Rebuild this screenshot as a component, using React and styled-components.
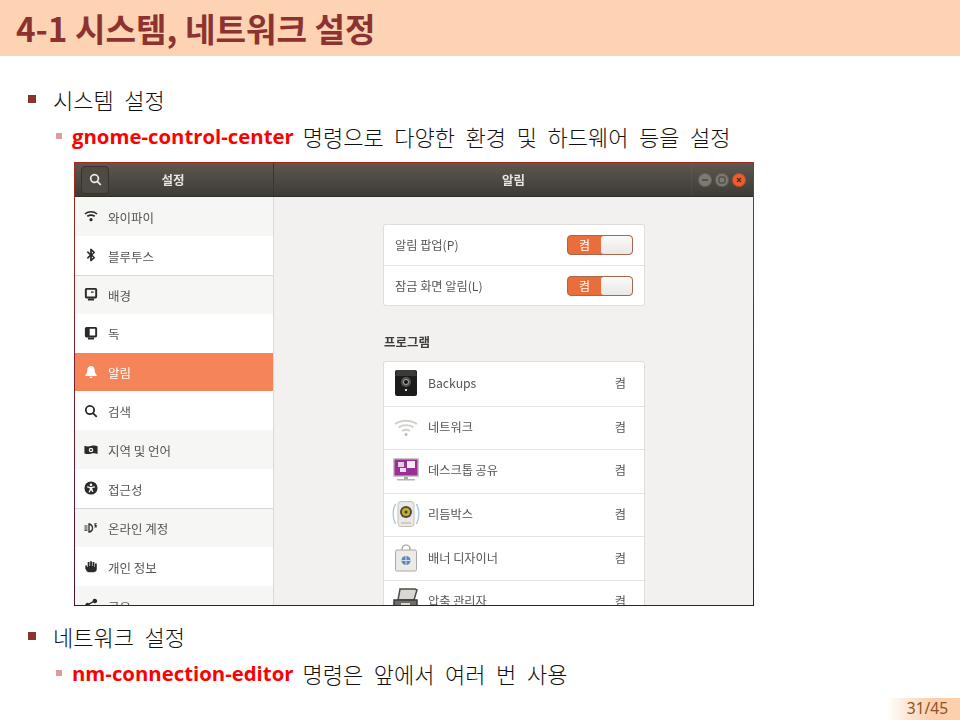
import React from "react";
import styled, { createGlobalStyle } from "styled-components";

const FONT = `"Noto Sans CJK KR", "Noto Sans", sans-serif`;

const GlobalStyle = createGlobalStyle`
  html, body { margin: 0; padding: 0; background: #fff; }
  body { font-family: ${FONT}; }
`;

const Slide = styled.div`
  width: 960px;
  height: 720px;
  display: flex;
  flex-direction: column;
  overflow: hidden;
  background: #fff;
`;

const Header = styled.header`
  height: 56px;
  flex: none;
  display: flex;
  align-items: center;
  padding: 0 0 2px 16px;
  box-sizing: border-box;
  background: #fdd3b4;
`;

const Title = styled.h1`
  margin: 0;
  font-size: 33.2px;
  font-weight: 700;
  color: #8c3331;
`;

const Body = styled.main`
  padding-top: 26px;
  display: flex;
  flex-direction: column;
`;

const Line = styled.div`
  height: 37px;
  box-sizing: border-box;
  display: flex;
  align-items: center;
  padding-left: ${(p) => (p.$sub ? 56 : 28)}px;
  padding-bottom: ${(p) => (p.$sub ? 3 : 4)}px;
  font-size: 22px;
  font-weight: 300;
  word-spacing: 5.7px;
  color: #111;
  white-space: pre;
`;

const Bullet = styled.span`
  width: ${(p) => (p.$sub ? 6 : 8)}px;
  height: ${(p) => (p.$sub ? 6 : 8)}px;
  margin-right: ${(p) => (p.$sub ? 10 : 17)}px;
  flex: none;
  background: ${(p) => (p.$sub ? "#dd9c9c" : "#8c3331")};
`;

const Command = styled.b`
  color: #fd0000;
  font-family: "Open Sans", "Noto Sans", sans-serif;
  font-weight: 700;
  font-size: 20.35px;
  word-spacing: 0;
  margin-right: 9px;
`;

const Window = styled.div`
  width: 680px;
  height: 444px;
  margin: 6px 0 13px 74px;
  box-sizing: border-box;
  border: 1px solid;
  border-image: linear-gradient(#a32a1c, #4c1238) 1;
  display: flex;
  flex-direction: column;
  overflow: hidden;
  filter: blur(0.45px);
  background: #f2f1ef;
`;

const TitleBar = styled.div`
  height: 34px;
  flex: none;
  display: flex;
  background: linear-gradient(#5d584f, #3d3b36);
  border-bottom: 1px solid #2e2d29;
  box-sizing: border-box;
  color: #e6e4df;
  font-size: 12.5px;
  font-weight: 700;
`;

const BarLeft = styled.div`
  width: 199px;
  flex: none;
  display: flex;
  align-items: center;
  padding-left: 6px;
  box-sizing: border-box;
  border-right: 1px solid #38362f;
`;

const SearchButton = styled.div`
  width: 28px;
  height: 28px;
  box-sizing: border-box;
  border: 1px solid #35332e;
  border-radius: 4px;
  display: flex;
  align-items: center;
  justify-content: center;
  background: #4e4a43;
`;

const BarTitle = styled.div`
  flex: 1;
  text-align: center;
  padding-right: ${(p) => p.$pad || 0}px;
  line-height: 33px;
`;

const BarRight = styled.div`
  flex: 1;
  display: flex;
  align-items: center;
  position: relative;
`;

const WindowButtons = styled.div`
  position: absolute;
  top: 0;
  right: 0;
  bottom: 0;
  display: flex;
  gap: 3px;
  padding: 0 7px 0 6px;
  align-items: center;
  border-left: 1px solid rgba(255, 255, 255, 0.04);
`;

const RoundButton = styled.span`
  width: 14px;
  height: 14px;
  border-radius: 50%;
  display: flex;
  align-items: center;
  justify-content: center;
  background: ${(p) => (p.$close ? "#ea5f2c" : "#7d7a72")};
  box-shadow: inset 0 0 0 1px rgba(0, 0, 0, 0.2);
`;

const Columns = styled.div`
  flex: 1;
  min-height: 0;
  display: flex;
`;

const Sidebar = styled.nav`
  width: 199px;
  flex: none;
  box-sizing: border-box;
  border-right: 1px solid #dcdad6;
  overflow: hidden;
  background: #fff;
`;

const SideRow = styled.div`
  height: 38.9px;
  display: flex;
  align-items: center;
  padding: 1.5px 0 0 9px;
  gap: 10px;
  font-size: 12.5px;
  box-sizing: border-box;
  color: ${(p) => (p.$active ? "#fff" : "#555553")};
  background: ${(p) => (p.$active ? "#f58558" : p.$shade ? "#f6f6f5" : "#fff")};
  border-top: ${(p) => (p.$rule ? "1px solid #d8d7d4" : "none")};
`;

const SideIcon = styled.svg`
  width: 14px;
  height: 14px;
  flex: none;
  margin-top: -2px;
  fill: ${(p) => (p.$active ? "#fff" : "#2a2a28")};
`;

const SearchGlyph = styled.svg`
  width: 13px;
  height: 13px;
  fill: #eeece8;
`;

const Content = styled.section`
  flex: 1;
  padding: 28px 0 0 110px;
  overflow: hidden;
`;

const Card = styled.div`
  width: 260px;
  background: #fff;
  border-radius: 2px;
  box-sizing: border-box;
  box-shadow: 0 0 0 1px #dfdedb;
`;

const ToggleRow = styled.div`
  height: 40px;
  box-sizing: border-box;
  display: flex;
  align-items: center;
  justify-content: space-between;
  padding: 0 11px;
  font-size: 12.2px;
  color: #555553;
  & + & { border-top: 1px solid #e4e3e0; }
`;

const Toggle = styled.div`
  width: 66px;
  height: 20px;
  box-sizing: border-box;
  border: 1px solid #a8664a;
  border-radius: 4px;
  display: flex;
  background: #ea6e3c;
  overflow: hidden;
`;

const ToggleLabel = styled.span`
  width: 33px;
  text-align: center;
  color: #fff;
  font-size: 12px;
  line-height: 17px;
`;

const ToggleThumb = styled.span`
  flex: 1;
  border-radius: 3px;
  background: linear-gradient(#fafaf9, #e9e8e5);
`;

const SectionTitle = styled.h2`
  margin: 27px 0 11px;
  font-size: 12.5px;
  line-height: 19px;
  font-weight: 700;
  color: #3d3d3b;
`;

const AppRow = styled.div`
  height: 43.6px;
  flex: none;
  display: flex;
  align-items: center;
  box-sizing: border-box;
  padding: 0 18px 2px 8px;
  gap: 8px;
  font-size: 12.2px;
  color: #555553;
  & + & { border-top: 1px solid #e4e3e0; }
`;

const AppName = styled.span`
  flex: 1;
`;

const AppIcon = styled.svg`
  width: 28px;
  height: 28px;
  flex: none;
`;

const PageNumber = styled.div`
  margin-top: auto;
  align-self: flex-end;
  width: 74px;
  height: 22px;
  display: flex;
  align-items: center;
  justify-content: flex-end;
  padding: 0 12px 2px 0;
  box-sizing: border-box;
  font-family: "Noto Sans", sans-serif;
  font-size: 15.5px;
  color: #8a5426;
  background: linear-gradient(90deg, #fff, #fcd0ad 60%);
`;

const wifi = (
  <>
    <path d="M8 14a1.800 1.800 0 1 0 0-3.600 1.800 1.800 0 0 0 0 3.600z" />
    <path d="M.5 5C4.800 1.200 11.200 1.200 15.500 5l-1.100 1.300C10.600 3.200 5.400 3.200 1.600 6.300z" />
    <path d="M3.200 7.800c2.800-2.300 6.800-2.300 9.600 0l-1.200 1.300c-2.100-1.600-5.100-1.600-7.200 0z" />
  </>
);

const bluetooth = (
  <path d="M7 .8h1.600l4.200 4L9.900 8l2.900 3.200-4.200 4H7V10L4.500 12.500 3.200 11.200 6.400 8 3.200 4.800l1.300-1.300L7 6zM9 3.700v2.800l1.400-1.400zm0 5.800v2.800l1.400-1.400z" />
);

const monitor = (
  <path
    fillRule="evenodd"
    d="M2.800 1h10.400A1.800 1.800 0 0 1 15 2.800v8.400a1.800 1.800 0 0 1-1.800 1.800H2.800A1.800 1.800 0 0 1 1 11.200V2.800A1.800 1.800 0 0 1 2.800 1zM3.200 3.200v7.600h9.600V3.200zM4.500 13.500h7v2h-7zM8 5h3v1.500H8z"
  />
);

const dock = (
  <path
    fillRule="evenodd"
    d="M2.800 1h10.400A1.800 1.800 0 0 1 15 2.800v8.400a1.800 1.800 0 0 1-1.800 1.800H2.800A1.800 1.800 0 0 1 1 11.200V2.800A1.800 1.800 0 0 1 2.800 1zM6.500 3.200v7.600h6.300V3.200zM4.500 13.500h7v2h-7z"
  />
);

const bell = (
  <path d="M8 1c2.800 0 4.200 2 4.200 4.800 0 3 .8 4.400 2.300 5.700v1.200H1.500v-1.200C3 10.200 3.800 8.800 3.800 5.800 3.800 3 5.200 1 8 1zM6.200 13.500h3.600A1.800 1.800 0 0 1 8 15.200a1.800 1.800 0 0 1-1.800-1.700z" />
);

const search = (
  <path
    fillRule="evenodd"
    d="M6.800 1a5.800 5.800 0 0 1 4.700 9.200l3.800 3.800-1.500 1.500-3.800-3.800A5.800 5.800 0 1 1 6.800 1zm0 2.100a3.700 3.700 0 1 0 0 7.400 3.700 3.700 0 0 0 0-7.400z"
  />
);

const region = (
  <path
    fillRule="evenodd"
    d="M.5 3.200c2.500 1 5 1 7.500.3s5-.7 7.500.2v8.800c-2.500-1-5-1-7.500-.3s-5 .7-7.500-.2zM8 5.400a2.600 2.600 0 1 0 0 5.200 2.600 2.600 0 0 0 0-5.200zm0 1.400a1.200 1.200 0 1 1 0 2.400 1.200 1.200 0 0 1 0-2.400z"
  />
);

const access = (
  <path
    fillRule="evenodd"
    d="M8 .5a7.500 7.500 0 1 1 0 15 7.500 7.500 0 0 1 0-15zm0 2.300a1.500 1.500 0 1 0 0 3 1.500 1.500 0 0 0 0-3zM3.500 6v1.400l3 .7v1.500l-1.300 3.100 1.300.5L8 10.200l1.500 2.500 1.300-.5-1.300-3.100V8.100l3-.7V6L8 6.900z"
  />
);

const online = (
  <path
    fillRule="evenodd"
    d="M.5 5h3.500v1.400H.5zM.5 9.600h3.500V11H.5zM.5 7.300h3.500v1.400H.5zM5 2.500c3.300 0 5.500 2.400 5.500 5.500S8.300 13.500 5 13.500zM6.500 4.500v7c1.500-.5 2.500-1.900 2.500-3.500S8 5 6.500 4.500zM12 2.500h2.500v1.300h-1.300v.8h1.300v2.700H12V6h1.300v-.3H12z"
  />
);

const hand = (
  <path d="M1.500 7.500h2V9h.7V3.500h2.100V8H7V2.500h2.100V8h.7V3.500h2.100V9h.6V5h2.100v6.500a3.500 3.500 0 0 1-3.500 3.500H6c-2.300 0-3-1-3.500-2.500L1.500 11z" />
);

const share = (
  <path d="M12.500 1a2.500 2.500 0 1 1-1.900 4.100L6.400 7.400a2.500 2.500 0 0 1 0 1.200l4.200 2.300a2.500 2.500 0 1 1-.7 1.300L5.700 9.900a2.500 2.500 0 1 1 0-3.800l4.200-2.300A2.500 2.500 0 0 1 12.500 1z" />
);

const sideItems = [
  { label: "와이파이", icon: wifi, shade: true },
  { label: "블루투스", icon: bluetooth },
  { label: "배경", icon: monitor, shade: true, rule: true },
  { label: "독", icon: dock },
  { label: "알림", icon: bell, active: true },
  { label: "검색", icon: search },
  { label: "지역 및 언어", icon: region, shade: true },
  { label: "접근성", icon: access },
  { label: "온라인 계정", icon: online, shade: true, rule: true },
  { label: "개인 정보", icon: hand },
  { label: "공유", icon: share, shade: true },
];

const BackupsIcon = () => (
  <AppIcon viewBox="0 0 28 28">
    <rect x="3" y="1" width="22" height="26" rx="2" fill="#1c1c1a" />
    <path d="M5 1h18l2 6H3z" fill="#3a3a37" />
    <circle cx="14" cy="13" r="5" fill="#55544f" />
    <circle cx="14" cy="13" r="2.500" fill="#111" stroke="#ccc" strokeWidth="0.800" />
    <rect x="13" y="20" width="2" height="2" fill="#ddd" />
  </AppIcon>
);

const NetworkIcon = () => (
  <AppIcon viewBox="0 0 28 28" fill="none" stroke="#d2d0cb" strokeWidth="2">
    <path d="M3 11c6.500-4.500 15.500-4.500 22 0" />
    <path d="M6.500 14.500c4.500-3 10.500-3 15 0" />
    <path d="M10 18c2.500-1.500 5.500-1.500 8 0" />
    <circle cx="14" cy="21.500" r="1.500" fill="#bdbbb6" stroke="none" />
  </AppIcon>
);

const DesktopShareIcon = () => (
  <AppIcon viewBox="0 0 28 28">
    <rect x="1" y="2" width="26" height="19" rx="1" fill="#c9c7c4" />
    <rect x="2.500" y="3.500" width="23" height="16" fill="#9a2f96" />
    <rect x="6" y="6" width="6" height="5" fill="#e6cbe6" />
    <rect x="15" y="5" width="8" height="7" fill="#f4eef4" />
    <rect x="8" y="12" width="6" height="4" fill="#f0dff0" />
    <rect x="12" y="21" width="4" height="2" fill="#a9a7a3" />
    <rect x="5" y="23" width="18" height="1.500" rx="0.700" fill="#b4b2ae" />
  </AppIcon>
);

const RhythmboxIcon = () => (
  <AppIcon viewBox="0 0 28 28">
    <path d="M3.500 4c-3 6-3 14 0 20M24.500 4c3 6 3 14 0 20" fill="none" stroke="#a9c5e6" strokeWidth="1.500" />
    <rect x="6" y="1.500" width="16" height="25" rx="3" fill="#e9e8e4" stroke="#c4c2bd" />
    <circle cx="14" cy="12" r="6" fill="#4a4a42" />
    <circle cx="14" cy="12" r="4" fill="#c9b02a" />
    <circle cx="14" cy="12" r="1.500" fill="#3a3a2a" />
    <rect x="9" y="22" width="10" height="2" fill="#cfcdc8" />
  </AppIcon>
);

const BannerIcon = () => (
  <AppIcon viewBox="0 0 28 28">
    <path d="M10 8V5a4 4 0 0 1 8 0v3" fill="none" stroke="#9a9892" strokeWidth="1.200" />
    <rect x="3.500" y="6" width="21" height="21" rx="1.500" fill="#ecebe7" stroke="#aaa8a2" />
    <circle cx="14" cy="16.500" r="4.500" fill="#5b86bd" />
    <path d="M14 12v9M9.500 16.500h9" stroke="#d5e1ef" strokeWidth="1" />
  </AppIcon>
);

const ArchiveIcon = () => (
  <AppIcon viewBox="0 0 28 28">
    <path d="M8 2h15l2 1-3 10H6z" fill="#d9d7d2" stroke="#4d4c48" strokeWidth="1.500" />
    <path d="M2 13h23v13H2z" fill="#6e6d68" stroke="#3c3b37" strokeWidth="1.500" />
    <rect x="9" y="16" width="9" height="4" fill="#d9d7d2" />
  </AppIcon>
);

const apps = [
  { label: "Backups", Icon: BackupsIcon },
  { label: "네트워크", Icon: NetworkIcon },
  { label: "데스크톱 공유", Icon: DesktopShareIcon },
  { label: "리듬박스", Icon: RhythmboxIcon },
  { label: "배너 디자이너", Icon: BannerIcon },
  { label: "압축 관리자", Icon: ArchiveIcon },
];

const toggles = ["알림 팝업(P)", "잠금 화면 알림(L)"];

const App = () => {
  return (
    <Slide>
      <GlobalStyle />
      <Header>
        <Title>4-1 시스템, 네트워크 설정</Title>
      </Header>
      <Body>
        <Line>
          <Bullet />
          시스템 설정
        </Line>
        <Line $sub>
          <Bullet $sub />
          <Command>gnome-control-center</Command>
          명령으로 다양한 환경 및 하드웨어 등을 설정
        </Line>
        <Window>
          <TitleBar>
            <BarLeft>
              <SearchButton>
                <SearchGlyph viewBox="0 0 16 16">{search}</SearchGlyph>
              </SearchButton>
              <BarTitle $pad={36}>설정</BarTitle>
            </BarLeft>
            <BarRight>
              <BarTitle>알림</BarTitle>
              <WindowButtons>
                <RoundButton>
                  <svg width="8" height="8" viewBox="0 0 8 8">
                    <path d="M1 4h6" stroke="#3d3b36" strokeWidth="1.200" />
                  </svg>
                </RoundButton>
                <RoundButton>
                  <svg width="8" height="8" viewBox="0 0 8 8">
                    <rect x="1" y="1" width="6" height="6" rx="1" fill="none" stroke="#3d3b36" />
                  </svg>
                </RoundButton>
                <RoundButton $close>
                  <svg width="8" height="8" viewBox="0 0 8 8">
                    <path d="M2 2l4 4M6 2l-4 4" stroke="#5a2410" strokeWidth="1.200" />
                  </svg>
                </RoundButton>
              </WindowButtons>
            </BarRight>
          </TitleBar>
          <Columns>
            <Sidebar>
              {sideItems.map((item) => (
                <SideRow key={item.label} $shade={item.shade} $active={item.active} $rule={item.rule}>
                  <SideIcon viewBox="0 0 16 16" $active={item.active}>
                    {item.icon}
                  </SideIcon>
                  {item.label}
                </SideRow>
              ))}
            </Sidebar>
            <Content>
              <Card>
                {toggles.map((label) => (
                  <ToggleRow key={label}>
                    {label}
                    <Toggle>
                      <ToggleLabel>켬</ToggleLabel>
                      <ToggleThumb />
                    </Toggle>
                  </ToggleRow>
                ))}
              </Card>
              <SectionTitle>프로그램</SectionTitle>
              <Card>
                {apps.map(({ label, Icon }) => (
                  <AppRow key={label}>
                    <Icon />
                    <AppName>{label}</AppName>켬
                  </AppRow>
                ))}
              </Card>
            </Content>
          </Columns>
        </Window>
        <Line>
          <Bullet />
          네트워크 설정
        </Line>
        <Line $sub>
          <Bullet $sub />
          <Command>nm-connection-editor</Command>
          명령은 앞에서 여러 번 사용
        </Line>
      </Body>
      <PageNumber>31/45</PageNumber>
    </Slide>
  );
};

export default App;
